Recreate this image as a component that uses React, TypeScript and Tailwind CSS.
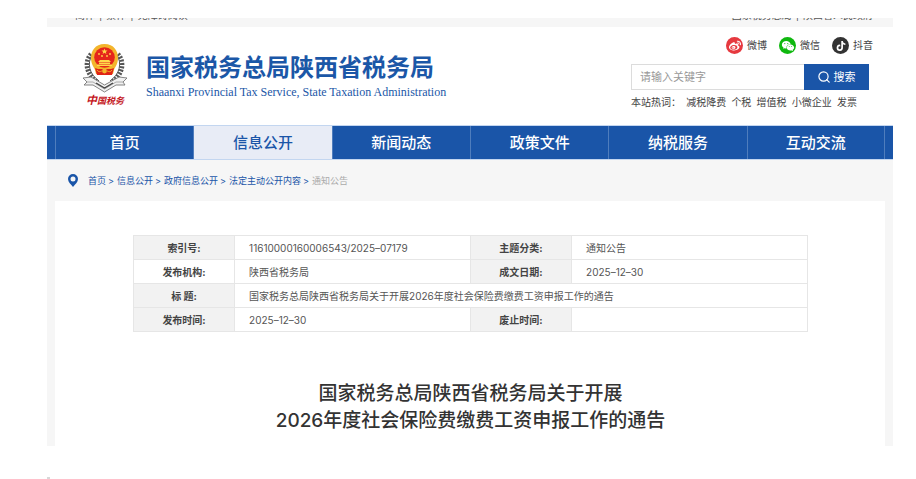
import { FaTiktok, FaWeibo } from 'react-icons/fa';
import { AiFillWechat } from 'react-icons/ai';

const navItems = ['首页', '信息公开', '新闻动态', '政策文件', '纳税服务', '互动交流'];
const hotWords = ['减税降费', '个税', '增值税', '小微企业', '发票'];
const crumbs = ['首页', '信息公开', '政府信息公开', '法定主动公开内容'];

const socials = [
  { name: '微博', icon: <FaWeibo size={12} />, color: 'bg-[#e6393f]' },
  { name: '微信', icon: <AiFillWechat size={14} />, color: 'bg-[#0fb80f]' },
  { name: '抖音', icon: <FaTiktok size={10} />, color: 'bg-[#333333]' },
];

function Emblem() {
  return (
    <svg width="46" height="50" viewBox="0 0 46 50" aria-hidden="true">
      {/* wheat ears */}
      <g fill="none" stroke="#555">
        <path d="M9 11C2 19 4 31 15 39" strokeWidth="4.600" strokeDasharray="2 1.300" />
        <path d="M36 11c7 8 5 20-6 28" strokeWidth="4.600" strokeDasharray="2 1.300" />
        <path d="M10 12C5 20 7 31 17 38M35 12c5 8 3 19-7 26" strokeWidth="1" />
      </g>
      {/* ribbon */}
      <path d="M1 35l8-1 13.500 8L37 34l8 1-4 4 2 3-9 0-11.500 7L11 42l-9 0 3-3z" fill="#f1f1f1" stroke="#777" strokeWidth="0.900" />
      <path d="M5 39l6 0 11.500 7L34 39l7 0" fill="none" stroke="#999" strokeWidth="0.800" />
      <path d="M14 40l8.500 5 8.500-5" fill="none" stroke="#444" strokeWidth="1.400" />
      {/* national emblem */}
      <path d="M22.500 1C13 1 9 8 9 15c0 6 3 9 4 12l1 4h17l1-4c1-3 4-6 4-12C36 8 32 1 22.500 1z" fill="#f3b52c" />
      <path d="M13 25l3 1h13l3-1-2 7H15z" fill="#df2317" />
      <circle cx="22.500" cy="14.500" r="10.300" fill="#e5251b" />
      <path d="M22.500 5.500l.8 2h2.200l-1.700 1.400.6 2.100-1.900-1.200-1.900 1.200.6-2.100-1.700-1.400h2.200z" fill="#ffd84a" />
      <g fill="#ffd84a">
        <circle cx="17" cy="11" r=".9" />
        <circle cx="20" cy="13" r=".9" />
        <circle cx="25" cy="13" r=".9" />
        <circle cx="28" cy="11" r=".9" />
        <path d="M16 19l2-2h9l2 2zM17 19.500h11V21H17zM15 21.500h15V23H15z" />
      </g>
      <circle cx="22.500" cy="28" r="2.400" fill="#f3b52c" />
      <path d="M15 27c2 3 4 1 5 1M30 27c-2 3-4 1-5 1" fill="none" stroke="#f3b52c" />
    </svg>
  );
}

function Logo() {
  return (
    <div className="flex items-center gap-[18px]">
      <div className="flex w-[46px] flex-col items-center">
        <Emblem />
        <span className="text-[9px] leading-[14px] font-bold whitespace-nowrap text-[#c4161c] italic">
          <span className="text-[11px]">中</span>国税务
        </span>
      </div>
      <div className="whitespace-nowrap text-[#1b57a7]">
        <h1 className="text-[24px] leading-8 font-bold">国家税务总局陕西省税务局</h1>
        <p className="font-['Liberation_Serif',serif] text-[12px] leading-4">
          Shaanxi Provincial Tax Service, State Taxation Administration
        </p>
      </div>
    </div>
  );
}

function SearchPanel() {
  return (
    <div className="flex w-[242px] flex-col">
      <ul className="flex justify-end gap-3 text-[10px] text-[#444]">
        {socials.map((s) => (
          <li key={s.name}>
            <a href="#" className="flex items-center gap-1">
              <span className={`flex size-[17px] items-center justify-center rounded-full text-white ${s.color}`}>
                {s.icon}
              </span>
              {s.name}
            </a>
          </li>
        ))}
      </ul>
      <form className="mt-[10px] mr-1 flex h-[26px] text-[11px]" onSubmit={(e) => e.preventDefault()}>
        <input
          type="text"
          aria-label="请输入关键字"
          placeholder="请输入关键字"
          className="min-w-0 flex-1 border border-r-0 border-[#dcdcdc] bg-white px-2 outline-none placeholder:text-[#999]"
        />
        <button type="submit" className="flex w-[65px] items-center justify-center gap-1 bg-[#1a55a8] text-white">
          <svg width="12" height="12" viewBox="0 0 12 12" fill="none" stroke="currentColor" strokeWidth="1.200" aria-hidden="true">
            <circle cx="5.500" cy="5.500" r="4.600" />
            <path d="M8.600 8.600l2.600 2.600" strokeLinecap="round" />
          </svg>
          搜索
        </button>
      </form>
      <div className="mt-1 mr-4 flex justify-between text-[10px] leading-4 whitespace-nowrap text-[#444]">
        <span>本站热词：</span>
        {hotWords.map((word) => (
          <a key={word} href="#">
            {word}
          </a>
        ))}
      </div>
    </div>
  );
}

function InfoTable() {
  const th = 'border border-[#e6e6e6] bg-[#f2f2f2] p-0 text-center font-bold text-[#444]';
  const td = 'border border-[#e6e6e6] py-0 pr-0 pl-[14px] text-[#555]';

  return (
    <table className="w-full table-fixed border-collapse text-[10px] leading-4">
      <colgroup>
        <col className="w-[15%]" />
        <col className="w-[35%]" />
        <col className="w-[15%]" />
        <col className="w-[35%]" />
      </colgroup>
      <tbody>
        <tr className="h-6">
          <th className={th}>索引号:</th>
          <td className={td}>11610000160006543/2025–07179</td>
          <th className={th}>主题分类:</th>
          <td className={td}>通知公告</td>
        </tr>
        <tr className="h-6">
          <th className="border border-[#e6e6e6] p-0 text-center font-bold text-[#444]">发布机构:</th>
          <td className={td}>陕西省税务局</td>
          <th className={th}>成文日期:</th>
          <td className={td}>2025–12–30</td>
        </tr>
        <tr className="h-6">
          <th className={th}>标 题:</th>
          <td className={td} colSpan={3}>
            国家税务总局陕西省税务局关于开展2026年度社会保险费缴费工资申报工作的通告
          </td>
        </tr>
        <tr className="h-6">
          <th className={th}>发布时间:</th>
          <td className={td}>2025–12–30</td>
          <th className={th}>废止时间:</th>
          <td className={td}></td>
        </tr>
      </tbody>
    </table>
  );
}

export default function App() {
  return (
    <div className="bg-white pt-[18px] pr-[23px] pl-[47px] font-['Inter','Noto_Sans_CJK_SC',sans-serif]">
      {/* Top links, scrolled mostly out of view */}
      <div className="flex h-[9px] items-end justify-between overflow-hidden bg-[#f6f6f6] pr-5 pl-7 text-[10px] leading-6 whitespace-nowrap text-[#555]">
        <div className="flex gap-1">
          <a href="#">简体</a>
          <span>|</span>
          <a href="#">繁体</a>
          <span>|</span>
          <a href="#">无障碍阅读</a>
        </div>
        <div className="flex gap-1">
          <a href="#">国家税务总局</a>
          <span>|</span>
          <a href="#">陕西省人民政府</a>
        </div>
      </div>

      <header className="flex items-start justify-between pt-[10px] pr-5 pb-[15px] pl-[35px]">
        <div className="pt-[6px]">
          <Logo />
        </div>
        <SearchPanel />
      </header>

      <nav className="grid grid-cols-6 border-y border-[#c3d6f0] bg-[#1a55a8] px-2">
        {navItems.map((item) => (
          <a
            key={item}
            href="#"
            className={`border-l border-[#4f7dbd] text-center text-[15px] leading-[33px] font-medium last:border-r ${
              item === '信息公开' ? 'bg-[#e8ecf6] text-[#1a55a8]' : 'text-white'
            }`}
          >
            {item}
          </a>
        ))}
      </nav>

      <main className="bg-[#f6f6f6] px-2">
        <div className="flex h-[41px] items-center gap-[10px] pl-[13px] text-[9px] whitespace-nowrap text-[#1a55a8]">
          <svg width="10" height="13" viewBox="0 0 10 13" aria-hidden="true">
            <path
              fillRule="evenodd"
              fill="currentColor"
              d="M5 0a5 5 0 0 0-5 5c0 3 3 5.500 5 8 2-2.500 5-5 5-8a5 5 0 0 0-5-5zm0 2.500a2.500 2.500 0 1 1 0 5 2.500 2.500 0 0 1 0-5z"
            />
          </svg>
          <div className="flex gap-[3px]">
            {crumbs.map((crumb) => (
              <span key={crumb} className="flex gap-0.5">
                <a href="#">{crumb}</a>
                <span>&gt;</span>
              </span>
            ))}
            <span className="text-[#aaa]">通知公告</span>
          </div>
        </div>

        <article className="bg-white pt-[34px] pr-[77px] pb-3 pl-[78px]">
          <InfoTable />
          <h2 className="mt-12 text-center text-[19px] leading-[27px] font-medium text-[#333]">
            国家税务总局陕西省税务局关于开展
            <br />
            2026年度社会保险费缴费工资申报工作的通告
          </h2>
        </article>
      </main>

      <div className="mt-[31px] h-0.5 w-[3px] bg-[#d8d8d8]" />
    </div>
  );
}
